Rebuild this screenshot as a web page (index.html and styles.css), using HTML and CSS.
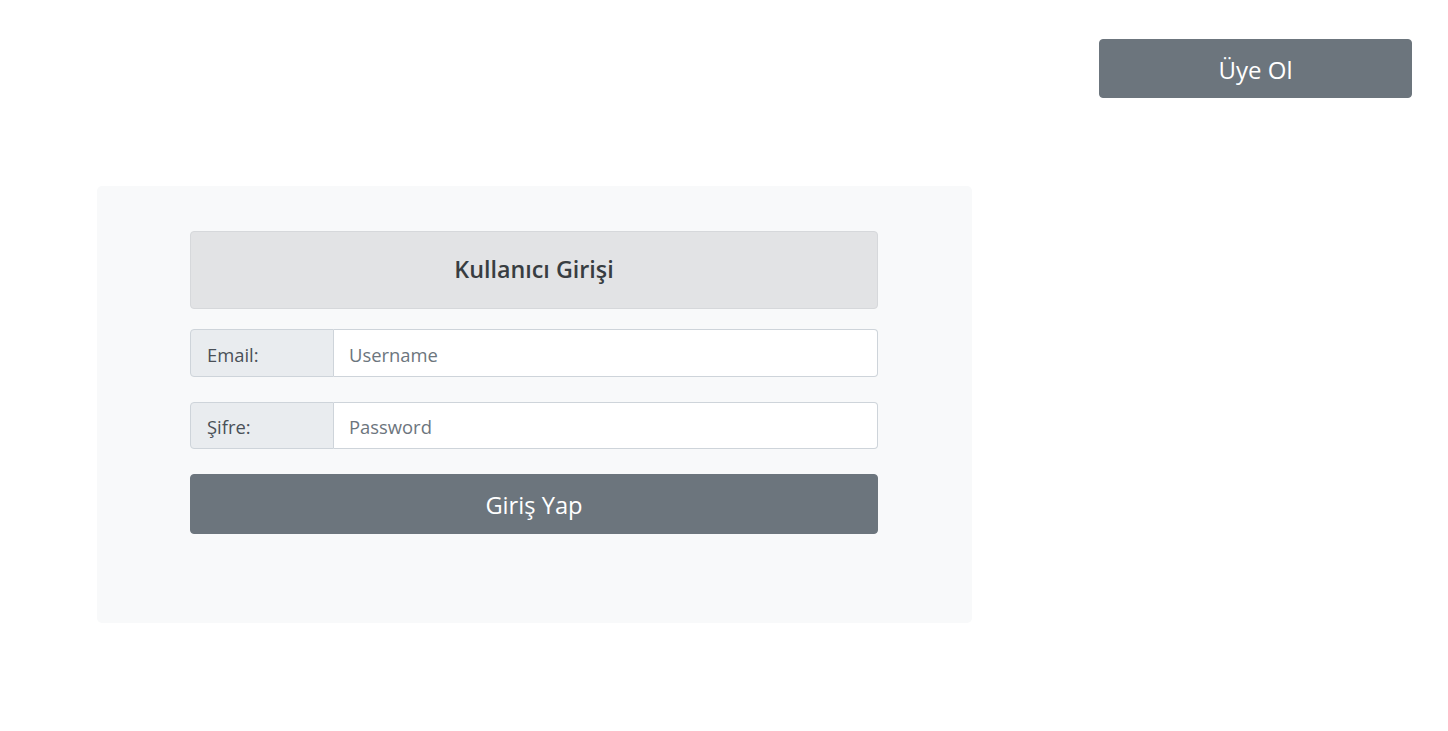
FILE: index.html
```html
<!DOCTYPE html>
<html lang="tr">
<head>
<meta charset="utf-8">
<title>Kullanıcı Girişi</title>
<link rel="stylesheet" href="styles.css">
</head>
<body>
<header class="topbar">
  <a class="btn btn-signup" href="#">Üye Ol</a>
</header>
<main class="main">
  <section class="card">
    <form class="login-form">
      <div class="form-title"><h4>Kullanıcı Girişi</h4></div>
      <div class="input-group">
        <span class="input-label">Email:</span>
        <input class="input-field" type="text" placeholder="Username">
      </div>
      <div class="input-group">
        <span class="input-label">Şifre:</span>
        <input class="input-field" type="password" placeholder="Password">
      </div>
      <button class="btn btn-login" type="button">Giriş Yap</button>
    </form>
  </section>
</main>
</body>
</html>
```

FILE: styles.css
```css
* { box-sizing: border-box; }
html, body { margin: 0; padding: 0; background: #fff; }
body {
  font-family: "Open Sans", "Noto Sans", "Liberation Sans", sans-serif;
  color: #212529;
  width: 1448px;
  height: 731px;
  overflow: hidden;
}
.topbar {
  display: flex;
  justify-content: flex-end;
  padding: 39px 36px 0 0;
}
.btn {
  display: flex;
  align-items: center;
  justify-content: center;
  background: #6c757d;
  color: #fff;
  border: 1px solid #6c757d;
  border-radius: 4px;
  text-decoration: none;
  font-family: inherit;
  cursor: pointer;
}
.btn-signup {
  width: 313px;
  height: 59px;
  font-size: 24px;
  padding-top: 1px;
}
.main {
  padding: 88px 0 0 97px;
}
.card {
  width: 875px;
  height: 437px;
  background: #f8f9fa;
  border-radius: 5px;
  padding: 45px 94px 0 93px;
}
.login-form {
  display: flex;
  flex-direction: column;
}
.form-title {
  height: 78px;
  background: #e2e3e5;
  border: 1px solid #d6d8db;
  border-radius: 4px;
  display: flex;
  align-items: center;
  justify-content: center;
  margin-bottom: 20px;
  padding-bottom: 2px;
}
.form-title h4 {
  margin: 0;
  font-size: 23.3px;
  font-weight: 600;
  color: #383d41;
}
.input-group {
  display: flex;
  height: 48px;
  margin-bottom: 25px;
}
.input-group + .input-group { height: 47px; }
.input-label {
  width: 144px;
  flex: none;
  display: flex;
  align-items: center;
  padding: 2px 16px 0 16px;
  background: #e9ecef;
  border: 1px solid #ced4da;
  border-radius: 4px 0 0 4px;
  font-size: 18.4px;
  color: #495057;
}
.input-field {
  flex: 1;
  min-width: 0;
  border: 1px solid #ced4da;
  border-left: none;
  border-radius: 0 4px 4px 0;
  background: #fff;
  padding: 2px 15px 0;
  font-family: inherit;
  font-size: 18.4px;
  color: #495057;
  outline: none;
}
.input-field::placeholder { color: #6c757d; opacity: 1; }
.btn-login {
  height: 60px;
  width: 100%;
  font-size: 23.7px;
  padding: 2px 0 0;
}
```
